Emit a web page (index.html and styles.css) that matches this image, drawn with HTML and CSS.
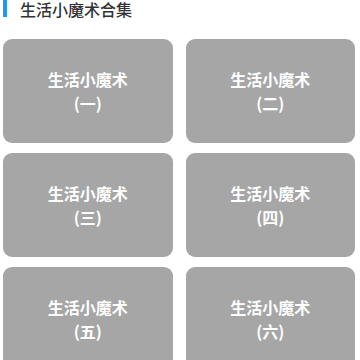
FILE: index.html
```html
<!DOCTYPE html>
<html>
    <head>
        <meta http-equiv="content-type" content="text/html;charset=utf-8">
        <title>生活小魔术合集</title>
        <link rel="stylesheet" href="styles.css">
    </head>
    <body>
        <!-- 标题 -->
        <div class="title">
            <span class="title-bar"></span>
            <span class="title-text">生活小魔术合集</span>
        </div>
        <!-- 列表 -->
        <div class="list">
            <div class="card">生活小魔术<br>(一)</div>
            <div class="card">生活小魔术<br>(二)</div>
            <div class="card">生活小魔术<br>(三)</div>
            <div class="card">生活小魔术<br>(四)</div>
            <div class="card">生活小魔术<br>(五)</div>
            <div class="card">生活小魔术<br>(六)</div>
        </div>
    </body>
</html>
```

FILE: styles.css
```css
body {
    margin: 0;
    background: #fff;
    font-family: "Noto Sans CJK SC", "Noto Sans", sans-serif;
}
/* 标题 */
.title {
    display: flex;
    align-items: center;
    height: 18px;
    padding-left: 3px;
}
.title-bar {
    width: 4px;
    height: 17px;
    background: #2196f3;
    margin-top: -1px;
}
.title-text {
    margin-left: 13px;
    font-size: 16px;
    font-weight: 500;
    color: #333;
    line-height: 18px;
}
/* 卡片 */
.list {
    display: grid;
    grid-template-columns: 1fr 1fr;
    column-gap: 13px;
    row-gap: 10px;
    padding: 21px 5px 0 3px;
}
.card {
    height: 104px;
    border-radius: 9px;
    background: #a6a6a6;
    color: #fff;
    font-size: 16px;
    font-weight: bold;
    line-height: 24px;
    display: flex;
    align-items: center;
    justify-content: center;
    text-align: center;
}
```
